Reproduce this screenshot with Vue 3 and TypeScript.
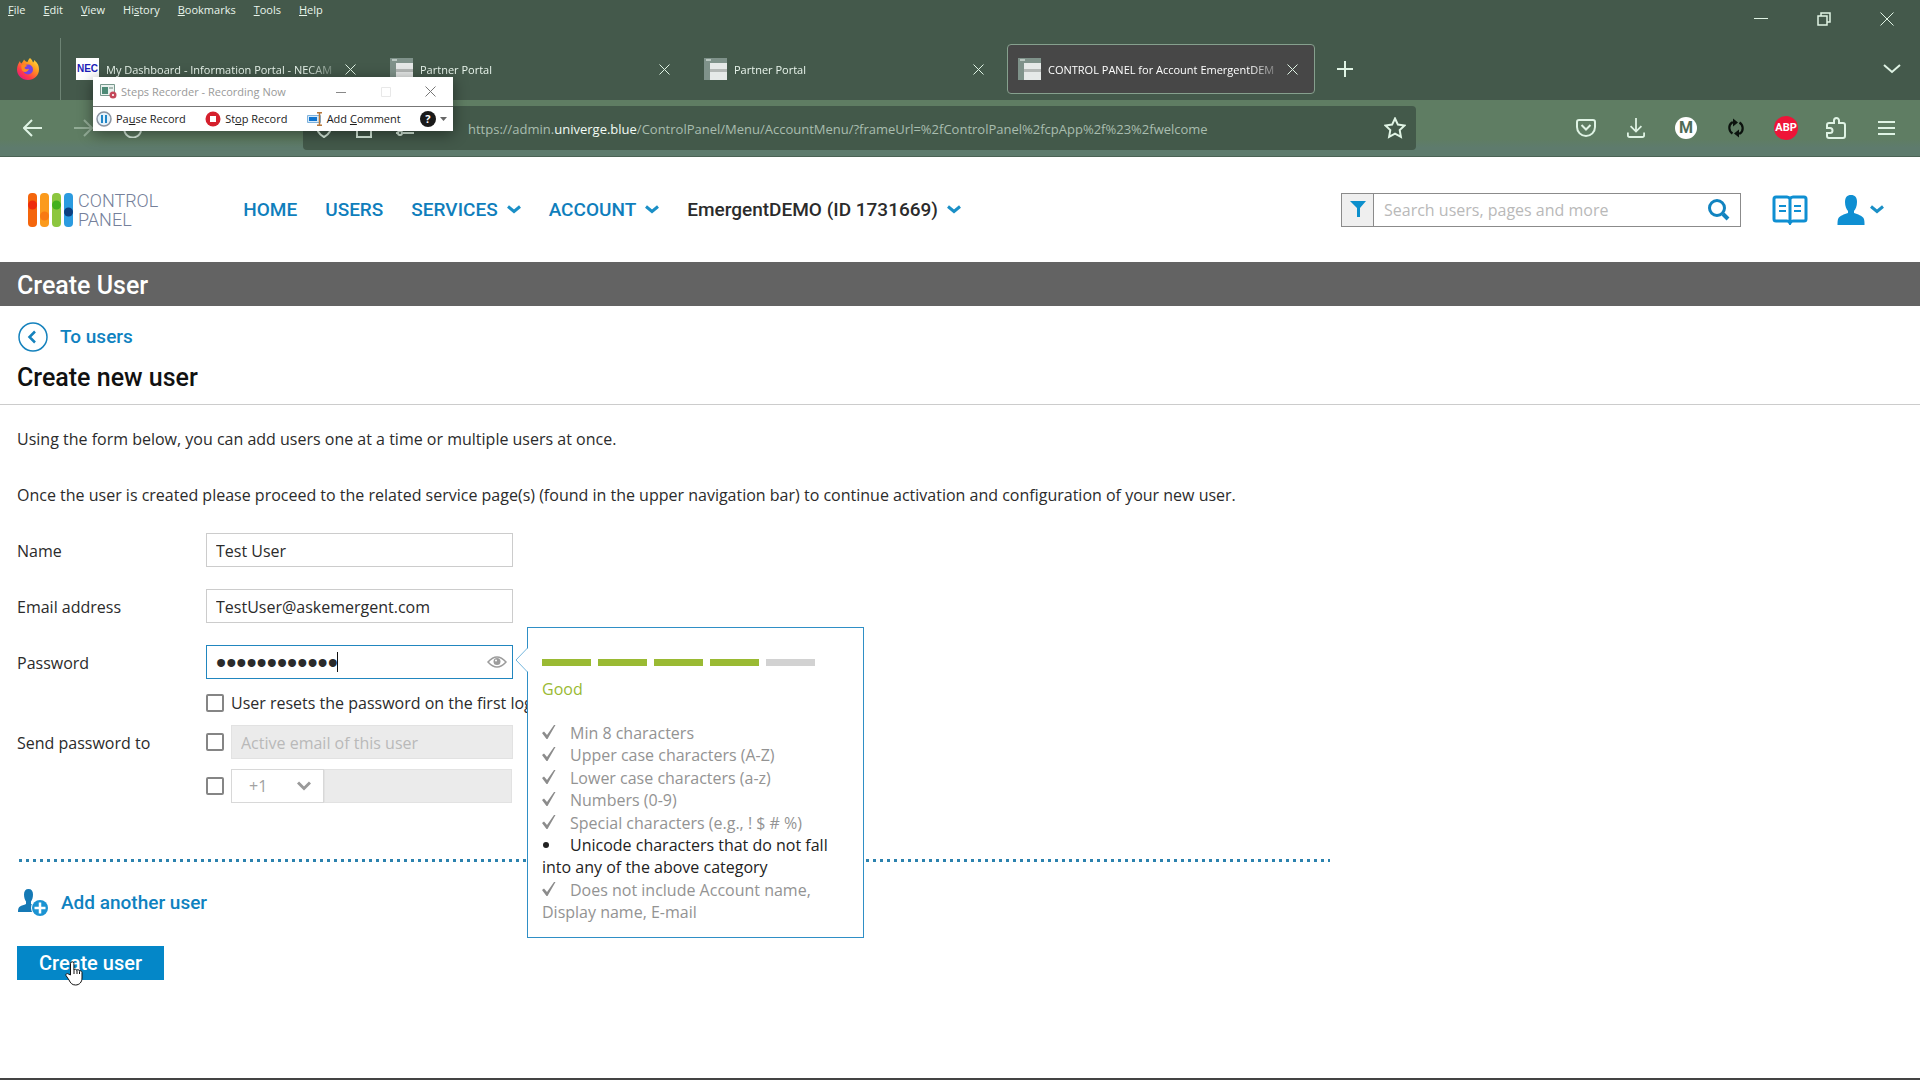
<script setup lang="ts">
import { ref } from 'vue'

interface Tab {
  title: string
  icon: 'nec' | 'portal'
  active: boolean
}

interface Rule {
  text: string
  met: boolean
}

const menus: string[][] = [
  ['', 'F', 'ile'],
  ['', 'E', 'dit'],
  ['', 'V', 'iew'],
  ['Hi', 's', 'tory'],
  ['', 'B', 'ookmarks'],
  ['', 'T', 'ools'],
  ['', 'H', 'elp'],
]

const tabs: Tab[] = [
  { title: 'My Dashboard - Information Portal - NECAM', icon: 'nec', active: false },
  { title: 'Partner Portal', icon: 'portal', active: false },
  { title: 'Partner Portal', icon: 'portal', active: false },
  { title: 'CONTROL PANEL for Account EmergentDEM', icon: 'portal', active: true },
]

const rules: Rule[] = [
  { text: 'Min 8 characters', met: true },
  { text: 'Upper case characters (A-Z)', met: true },
  { text: 'Lower case characters (a-z)', met: true },
  { text: 'Numbers (0-9)', met: true },
  { text: 'Special characters (e.g., ! $ # %)', met: true },
  { text: 'Unicode characters that do not fall into any of the above category', met: false },
  { text: 'Does not include Account name, Display name, E-mail', met: true },
]

const nav = [
  { label: 'HOME', menu: false, dark: false },
  { label: 'USERS', menu: false, dark: false },
  { label: 'SERVICES', menu: true, dark: false },
  { label: 'ACCOUNT', menu: true, dark: false },
  { label: 'EmergentDEMO (ID 1731669)', menu: true, dark: true },
]

const strength = 4
const name = ref('Test User')
const email = ref('TestUser@askemergent.com')
const password = ref('Passw0rd!234')
const resetOnLogin = ref(false)
const sendEmail = ref(false)
const sendPhone = ref(false)
</script>

<template>
  <div class="window">
    <div class="chrome">
      <div class="titlebar">
        <nav class="menubar">
          <a v-for="m in menus" :key="m[2]" href="#">{{ m[0] }}<u>{{ m[1] }}</u>{{ m[2] }}</a>
        </nav>
        <div class="wincontrols">
          <button aria-label="Minimize"><svg width="14" height="14" viewBox="0 0 14 14"><path d="M0 6.500h14" /></svg></button>
          <button aria-label="Restore"><svg width="14" height="14" viewBox="0 0 14 14"><path stroke-width="1.500" d="M1 4h9v9H1zM4 4V1h9v9h-3" /></svg></button>
          <button aria-label="Close window"><svg width="14" height="14" viewBox="0 0 14 14"><path d="M.5.5l13 13M13.500.5l-13 13" /></svg></button>
        </div>
      </div>

      <div class="tabstrip">
        <div class="pinned">
          <svg width="24" height="24" viewBox="0 0 24 24">
            <defs>
              <linearGradient id="fox" x1="1" y1="0" x2=".2" y2="1">
                <stop offset="0" stop-color="#fff04a" />
                <stop offset=".4" stop-color="#ff9a1f" />
                <stop offset=".75" stop-color="#ff3b47" />
                <stop offset="1" stop-color="#e31587" />
              </linearGradient>
            </defs>
            <g stroke="none">
              <path fill="url(#fox)" d="M14 1c2 1.500 2.500 3 3 4.500 1-.5 1-1.500 1-2.500 4 3 5 6 5 9.500C23 18.500 18 23 12 23S1 18.500 1 12.500C1 9 2.500 6 4 4c0 1 .5 2 1.500 2.500C6.500 5 7.500 4 8 2.500c1 1.500 2 2.500 3.500 2.500C12 3.500 13 2 14 1z" />
              <circle cx="12" cy="12.500" r="5" fill="#7543e3" />
              <path fill="#ff8a1e" d="M5.500 8c2-1 4-.6 6 1-1.500.2-2.500 1-3 2 1 1.500 3 1.500 4.500.8-.5 2-2 3.200-4 3.200-3 0-4-3.500-3.500-7z" />
            </g>
          </svg>
        </div>
        <div v-for="(t, i) in tabs" :key="i" class="tab" :class="{ active: t.active }">
          <span v-if="t.icon === 'nec'" class="nec">NEC</span>
          <svg v-else width="23" height="22" viewBox="0 0 23 22">
            <path fill="#7f928a" d="M0 0h23v22H0z" />
            <path fill="#b9c6c0" d="M2 1h5v2H2z" />
            <path fill="#e6e9e8" d="M6 5h17v17H6z" />
            <path fill="#b4b8b6" d="M6 11h17v3H6z" />
          </svg>
          <span class="title">{{ t.title }}</span>
          <button class="close" aria-label="Close tab"><svg width="11" height="11" viewBox="0 0 11 11"><path d="M.5.5l10 10M10.500.5l-10 10" /></svg></button>
        </div>
        <button class="newtab" aria-label="New tab"><svg width="16" height="16" viewBox="0 0 16 16"><path d="M8 0v16M0 8h16" /></svg></button>
        <button class="alltabs" aria-label="List all tabs"><svg width="18" height="10" viewBox="0 0 18 10"><path d="M1 1l8 7 8-7" /></svg></button>
      </div>

      <div class="toolbar">
        <button aria-label="Back"><svg width="20" height="18" viewBox="0 0 20 18"><path d="M19 9H2M9 1L1 9l8 8" /></svg></button>
        <button class="dim" aria-label="Forward"><svg width="20" height="18" viewBox="0 0 20 18"><path d="M1 9h17M11 1l8 8-8 8" /></svg></button>
        <button aria-label="Reload"><svg width="20" height="20" viewBox="0 0 20 20"><path d="M18 4v5h-5M18 9a8.500 8.500 0 1 0 0 4" /></svg></button>
        <div class="urlbar">
          <svg width="18" height="20" viewBox="0 0 18 20"><path d="M9 1l8 3c0 7-2 12-8 15C3 16 1 11 1 4z" /></svg>
          <svg width="18" height="20" viewBox="0 0 18 20"><path d="M2 9h14v10H2zM5 9V5a4 4 0 0 1 8 0v4" /></svg>
          <svg width="20" height="20" viewBox="0 0 20 20"><path d="M1 5h10M15 5h4M1 15h3M8 15h11" /><circle cx="13" cy="5" r="2" /><circle cx="5" cy="15" r="2" /></svg>
          <p class="url">https://admin.<b>univerge.blue</b>/ControlPanel/Menu/AccountMenu/?frameUrl=%2fControlPanel%2fcpApp%2f%23%2fwelcome</p>
          <button class="star" aria-label="Bookmark this page"><svg width="22" height="22" viewBox="0 0 22 22"><path d="M11 1.500l2.900 6.100 6.600.9-4.800 4.600 1.200 6.700L11 16.600l-5.900 3.200 1.200-6.700L1.500 8.500l6.600-.9z" /></svg></button>
        </div>
        <button aria-label="Pocket"><svg width="20" height="18" viewBox="0 0 20 18"><path d="M3 1h14q2 0 2 2v5a9 9 0 0 1-18 0V3q0-2 2-2zM5.500 6l4.500 4.500L14.500 6" /></svg></button>
        <button aria-label="Downloads"><svg width="18" height="20" viewBox="0 0 20 22"><path d="M10 0v14M4 9l6 6 6-6M1 16v3q0 2 2 2h14q2 0 2-2v-3" /></svg></button>
        <button aria-label="Account"><span class="badge-m">M</span></button>
        <button aria-label="Sync">
          <svg class="solid" width="16" height="20" viewBox="0 0 16 20">
            <path fill="none" stroke="#0b120d" stroke-width="2.200" d="M4.500 15.500C.5 13 .2 7 4 4.500H6M11.500 4.500C15.500 7 15.800 13 12 15.500H10" />
            <path fill="#0b120d" d="M5 .5l5 4-5 4zM11 19.500l-5-4 5-4z" />
          </svg>
        </button>
        <button aria-label="Adblock Plus"><span class="badge-abp">ABP</span></button>
        <button aria-label="Extensions"><svg width="20" height="22" viewBox="0 0 20 22"><path d="M8 6V3.500a2.500 2.500 0 0 1 5 0V6h4q2 0 2 2v11q0 2-2 2H3q-2 0-2-2v-3h3a2.500 2.500 0 0 0 0-5H1V8q0-2 2-2z" /></svg></button>
        <button aria-label="Menu"><svg width="17" height="14" viewBox="0 0 17 14"><path d="M0 1h17M0 7h17M0 13h17" /></svg></button>
      </div>
    </div>

    <section class="recorder" aria-label="Steps Recorder">
      <div class="rec-title">
        <svg width="17" height="15" viewBox="0 0 17 15">
          <path fill="#e9f1ee" stroke="#78998d" d="M.5.5h14v11H.5z" />
          <path fill="#4d8a76" d="M2 3h6v7H2z" />
          <path fill="#a9bab3" d="M9 3h4v2H9z" />
          <circle cx="13" cy="11" r="3.500" fill="#c4475a" />
          <path fill="#f3dede" d="M12 10h2v2h-2z" />
        </svg>
        <span>Steps Recorder - Recording Now</span>
        <button aria-label="Minimize recorder"><svg width="10" height="10" viewBox="0 0 10 10"><path stroke="#888" d="M0 5.500h10" /></svg></button>
        <button aria-label="Maximize recorder" disabled><svg width="10" height="10" viewBox="0 0 10 10"><path stroke="#e8e8e8" d="M.5.5h9v9h-9z" /></svg></button>
        <button aria-label="Close recorder"><svg width="11" height="11" viewBox="0 0 11 11"><path stroke="#777" d="M.5.5l10 10M10.500.5l-10 10" /></svg></button>
      </div>
      <div class="rec-tools">
        <button>
          <svg width="16" height="16" viewBox="0 0 16 16"><circle cx="8" cy="8" r="7" fill="#e3f1fa" stroke="#8a93a0" stroke-width="1.500" /><path fill="#1f86c8" d="M5 4h2v8H5zM9 4h2v8H9z" /></svg>
          <span>Pa<u>u</u>se Record</span>
        </button>
        <button>
          <svg width="16" height="16" viewBox="0 0 16 16"><circle cx="8" cy="8" r="7.500" fill="#d5202d" /><path fill="#fff" d="M5 5h6v6H5z" /></svg>
          <span>St<u>o</u>p Record</span>
        </button>
        <button>
          <svg width="16" height="14" viewBox="0 0 16 14"><path fill="#d6eafa" stroke="#7fb2dc" d="M.5 3.500h13v7H.5z" /><path fill="#0f74cf" d="M2 5h8v4H2z" /><path fill="none" stroke="#b5763a" stroke-width="1.500" d="M10 .8h5M10 13.200h5M12.500 1v12" /></svg>
          <span>Add <u>C</u>omment</span>
        </button>
        <button class="help" aria-label="Help"><span class="q">?</span><svg width="7" height="4" viewBox="0 0 7 4"><path fill="#666" d="M0 0h7L3.500 4z" /></svg></button>
      </div>
    </section>

    <header class="site">
      <a class="logo" href="#">
        <svg width="46" height="36" viewBox="0 0 46 36">
          <rect x="0" y="1" width="9" height="34" rx="4" fill="#f4650c" /><circle cx="4.500" cy="13" r="4.500" fill="#ee2c0c" />
          <rect x="12" y="1" width="9" height="34" rx="4" fill="#fb9a1c" /><circle cx="16.500" cy="24" r="4.500" fill="#f87a12" />
          <rect x="24" y="1" width="9" height="34" rx="4" fill="#8cc63f" /><circle cx="28.500" cy="13" r="4.500" fill="#44b01e" />
          <rect x="36" y="1" width="9" height="34" rx="4" fill="#2b9be0" /><circle cx="40.500" cy="20" r="4.500" fill="#0d3f80" />
        </svg>
        <span class="brand"><span>CONTROL</span><span>PANEL</span></span>
      </a>
      <nav class="mainnav">
        <a v-for="n in nav" :key="n.label" href="#" :class="{ dark: n.dark }">{{ n.label }}<svg v-if="n.menu" width="14" height="9" viewBox="0 0 14 9"><path d="M1 1.500l6 5 6-5" /></svg></a>
      </nav>
      <div class="search">
        <button class="filter" aria-label="Filter"><svg width="16" height="18" viewBox="0 0 16 18"><path fill="#0c8fcc" d="M0 0h16L10 7v9H7V7z" /></svg></button>
        <input type="text" aria-label="Search" placeholder="Search users, pages and more" />
        <button class="go" aria-label="Search now"><svg width="22" height="22" viewBox="0 0 22 22"><circle cx="9" cy="9" r="7.500" /><path stroke-width="4" d="M15 15l5 5" /></svg></button>
      </div>
      <a class="book" href="#" aria-label="Knowledge base">
        <svg width="36" height="30" viewBox="0 0 36 30"><path d="M18 4q-1-2-3-2H4Q2 2 2 4v20q0 2 2 2h11q2 0 3 2 1-2 3-2h11q2 0 2-2V4q0-2-2-2H21q-2 0-3 2zV28" /><path stroke-width="2" d="M7 11h7M7 16h7M22 11h7M22 16h7" /></svg>
      </a>
      <a class="me" href="#" aria-label="My account">
        <svg class="person" width="28" height="30" viewBox="0 0 28 30"><path d="M14 0c4 0 6 2.500 6 7s-1.500 7-3 9v2c4 1.500 8 2.500 9.500 5 1 2 1 4 1 7H.5c0-3 0-5 1-7 1.500-2.500 5.500-3.500 9.500-5v-2c-1.500-2-3-4.500-3-9s2-7 6-7z" /></svg>
        <svg width="14" height="9" viewBox="0 0 14 9"><path d="M1 1.500l6 5 6-5" /></svg>
      </a>
    </header>

    <div class="pagebar">Create User</div>

    <main>
      <a class="back" href="#">
        <svg width="30" height="30" viewBox="0 0 30 30"><circle cx="15" cy="15" r="14" stroke-width="1.500" /><path stroke-width="2.500" d="M17 9.500L11.500 15l5.500 5.500" /></svg>
        <span>To users</span>
      </a>
      <h1>Create new user</h1>

      <form @submit.prevent>
        <p>Using the form below, you can add users one at a time or multiple users at once.</p>
        <p>Once the user is created please proceed to the related service page(s) (found in the upper navigation bar) to continue activation and configuration of your new user.</p>

        <div class="row">
          <label class="lbl" for="name">Name</label>
          <input id="name" v-model="name" class="field" type="text" />
        </div>
        <div class="row">
          <label class="lbl" for="email">Email address</label>
          <input id="email" v-model="email" class="field" type="text" />
        </div>
        <div class="row">
          <label class="lbl" for="password">Password</label>
          <div class="pw">
            <input id="password" v-model="password" class="field focus" type="password" />
            <span class="caret"></span>
            <button type="button" class="eye" aria-label="Show password">
              <svg width="20" height="12" viewBox="0 0 20 12"><path fill="none" stroke="#9c9c9c" stroke-width="1.500" d="M1 6q9-10 18 0-9 10-18 0z" /><circle cx="10" cy="5.500" r="3.500" fill="#9c9c9c" /><circle cx="9" cy="4.500" r="1" fill="#fff" /></svg>
            </button>

            <aside class="tip">
              <svg class="arrow" width="13" height="26" viewBox="0 0 13 26"><path fill="#fff" d="M13 1L1 13l12 12z" /><path fill="none" stroke="#74b6dc" d="M12.500 1L1 13l11.500 12" /></svg>
              <div class="meter"><i v-for="n in 5" :key="n" :class="{ on: n <= strength }"></i></div>
              <p class="grade">Good</p>
              <ul>
                <li v-for="r in rules" :key="r.text" :class="{ unmet: !r.met }">
                  <span class="mark">
                    <svg v-if="r.met" width="14" height="14" viewBox="0 0 14 14"><path fill="#8c8c8c" d="M0 8l2-1.500L5 10 12 0h1.500L5.500 14H4.500z" /></svg>
                    <svg v-else width="14" height="14" viewBox="0 0 14 14"><circle cx="4" cy="8" r="3" fill="#222" /></svg>
                  </span>{{ r.text }}
                </li>
              </ul>
            </aside>
          </div>
        </div>

        <div class="row options">
          <span class="lbl"></span>
          <input id="reset" v-model="resetOnLogin" type="checkbox" />
          <label class="resetlbl" for="reset">User resets the password on the first login</label>
        </div>
        <div class="row options">
          <span class="lbl">Send password to</span>
          <input v-model="sendEmail" type="checkbox" aria-label="Send to email" />
          <input class="field off" type="text" aria-label="Email" placeholder="Active email of this user" disabled />
        </div>
        <div class="row options">
          <span class="lbl"></span>
          <input v-model="sendPhone" type="checkbox" aria-label="Send to phone" />
          <div class="phone">
            <div class="code">
              <select aria-label="Country code" disabled><option>+1</option></select>
              <svg width="14" height="10" viewBox="0 0 14 10"><path d="M1 1.500l6 6 6-6" /></svg>
            </div>
            <input class="field off" type="text" aria-label="Phone" disabled />
          </div>
        </div>

        <div class="dots"></div>

        <a class="add" href="#">
          <svg width="31" height="28" viewBox="0 0 31 28">
            <path fill="#1579b5" d="M10.500 0c3 0 4.500 2 4.500 5.500S14 11 13 12.500V15c3 1 6 2 7 4v4H0c0-3 .5-4.500 2-5.500s4-1.500 6-2.500v-2.500C7 11 6 9 6 5.500S7.500 0 10.500 0z" />
            <circle cx="22" cy="19" r="9" fill="#fff" />
            <circle cx="22" cy="19" r="8" fill="#1b93d2" />
            <path stroke="#fff" stroke-width="2.500" d="M22 13.500v11M16.500 19h11" />
          </svg>
          <span>Add another user</span>
        </a>
        <div class="submit">
          <button type="submit">Create user</button>
          <svg class="cursor" width="18" height="25" viewBox="0 0 18 25"><path fill="#fff" stroke="#111" stroke-linejoin="round" d="M5.500 14V2.500a1.700 1.700 0 0 1 3.400 0V9a1.500 1.500 0 0 1 2.800.5 1.500 1.500 0 0 1 2.800.7 1.500 1.500 0 0 1 2.500 1.200V17c0 4-2.500 7-6.500 7-3.500 0-5-2-6.500-5L1 14.500c-.5-1.500 1-2.500 2.300-1.500zM9 9v4M12 9.500V13M14.500 10.500V13" /></svg>
        </div>
      </form>
    </main>
    <div class="taskbar"></div>
  </div>
</template>

<style>
body {
  margin: 0;
  background: #fff;
}
</style>

<style scoped>
* {
  box-sizing: border-box;
}

.window {
  position: relative;
  display: flex;
  flex-direction: column;
  min-height: 100vh;
  overflow: hidden;
  background: #fff;
  color: #2b2b2b;
  font-family: "Open Sans", "Noto Sans", sans-serif;
  font-size: 16px;
  line-height: 22px;
}

a {
  color: inherit;
  text-decoration: none;
}

button {
  display: flex;
  align-items: center;
  justify-content: center;
  padding: 0;
  border: 0;
  background: none;
  color: inherit;
  font: inherit;
}

svg {
  display: block;
  flex: none;
}

.chrome {
  background: #44594b;
  color: #e9f5ec;
  font-size: 11px;
  line-height: 20px;
}

.chrome svg:not(.solid) {
  fill: none;
  stroke: #dff3e4;
}

.titlebar {
  display: flex;
  justify-content: space-between;
  height: 38px;
  padding: 0 2px 0 8px;
}

.menubar {
  display: flex;
  gap: 18px;
}

.wincontrols {
  display: flex;
}

.wincontrols button {
  width: 63px;
  height: 38px;
}

.tabstrip {
  display: flex;
  align-items: center;
  height: 62px;
}

.pinned {
  display: flex;
  align-items: center;
  width: 61px;
  height: 62px;
  padding-left: 16px;
  border-right: 1px solid #6d8374;
}

.tab {
  display: flex;
  flex: none;
  align-items: center;
  width: 308px;
  height: 50px;
  margin-left: 6px;
  padding: 0 16px 0 10px;
  border: 1px solid transparent;
  border-radius: 4px;
}

.tab:nth-child(2) {
  margin-left: 4px;
}

.tab.active {
  border-color: #86a08e;
  background: #474747;
  color: #fff;
}

.tab svg path[fill] {
  stroke: none;
}

.nec {
  width: 23px;
  background: #fff;
  color: #1d1db8;
  font: bold 10px/22px "Liberation Sans", sans-serif;
  text-align: center;
}

.title {
  flex: 1;
  margin: 0 2px 0 7px;
  padding-top: 2px;
  overflow: hidden;
  white-space: nowrap;
  mask-image: linear-gradient(to right, #000 85%, transparent);
}

.newtab {
  width: 60px;
  height: 40px;
}

.alltabs {
  width: 40px;
  height: 40px;
  margin: 0 8px 0 auto;
}

.newtab svg,
.alltabs svg {
  stroke-width: 2;
}

.toolbar {
  display: flex;
  align-items: center;
  height: 57px;
  padding: 0 9px 0 8px;
  border-bottom: 1px solid #4b6355;
  background: linear-gradient(#5f7d63 70%, #5e7b6d 85%);
}

.toolbar > button {
  width: 50px;
  height: 44px;
}

.toolbar svg {
  stroke-width: 2;
}

.dim {
  opacity: .4;
}

.urlbar {
  display: flex;
  flex: 1;
  align-items: center;
  gap: 22px;
  height: 44px;
  margin: 0 145px;
  padding: 0 10px 0 12px;
  border-radius: 4px;
  background: #43594a;
}

.url {
  flex: 1;
  margin: 0 0 0 31px;
  padding-top: 2px;
  overflow: hidden;
  color: #a9bdaf;
  font-size: 13px;
  white-space: nowrap;
}

.url b {
  color: #f2fbf4;
  font-weight: 400;
}

.badge-m,
.badge-abp {
  width: 22px;
  border-radius: 50%;
  background: #fff;
  color: #4f6b57;
  font: bold 16px/22px Roboto, sans-serif;
}

.badge-abp {
  width: 24px;
  background: #ef1438;
  color: #fff;
  font-size: 11px;
  line-height: 24px;
}

.recorder {
  position: absolute;
  z-index: 5;
  top: 77px;
  left: 93px;
  width: 360px;
  background: #fff;
  box-shadow: 0 3px 14px rgba(0, 0, 0, .45);
  color: #1c1c1c;
  font-size: 11px;
  line-height: 20px;
}

.rec-title {
  display: flex;
  align-items: center;
  height: 30px;
  padding-left: 7px;
  border-bottom: 1px solid #777;
  color: #999;
}

.rec-title span {
  flex: 1;
  margin-left: 4px;
}

.rec-title button {
  width: 45px;
  height: 28px;
}

.rec-title button svg {
  fill: none;
}

.rec-tools {
  display: flex;
  align-items: center;
  justify-content: space-between;
  height: 24px;
  padding: 0 6px 0 3px;
}

.rec-tools button {
  gap: 4px;
}

.q {
  width: 16px;
  border-radius: 50%;
  background: #1a1a1a;
  color: #fff;
  font-weight: 700;
  line-height: 16px;
}

.site {
  display: flex;
  align-items: center;
  height: 105px;
  padding: 0 36px 0 28px;
}

.logo {
  display: flex;
  align-items: center;
  gap: 4px;
  color: #75809a;
  font: 300 18px/19px Roboto, sans-serif;
}

.brand {
  display: flex;
  flex-direction: column;
}

.mainnav {
  display: flex;
  flex: 1;
  gap: 28px;
  margin-left: 85px;
  color: #0f7ebc;
  font: 500 19px/26px Roboto, sans-serif;
}

.mainnav a {
  display: flex;
  gap: 9px;
  align-items: center;
}

.mainnav .dark {
  color: #2b2b2b;
}

.mainnav svg,
.me svg:not(.person) {
  fill: none;
  stroke: #1a8fc6;
  stroke-width: 3;
}

.search {
  display: flex;
  width: 400px;
  height: 34px;
  border: 1px solid #8b8b8b;
}

.filter {
  width: 32px;
  border-right: 1px solid #8b8b8b;
  background: #efefef;
}

.search input {
  flex: 1;
  min-width: 0;
  padding: 0 10px;
  border: 0;
  outline: 0;
  font: inherit;
}

.search input::placeholder {
  color: #b9b9b9;
}

.go {
  width: 42px;
}

.go svg,
.book svg {
  fill: none;
  stroke: #1183c0;
  stroke-width: 3;
}

.book {
  margin-left: 31px;
}

.book svg {
  stroke: #0f8fd2;
}

.me {
  display: flex;
  gap: 5px;
  align-items: center;
  margin-left: 29px;
}

.person {
  fill: #0f8fd2;
}

.pagebar {
  height: 44px;
  padding-left: 17px;
  background: #636363;
  color: #fff;
  font: 500 25px/48px Roboto, sans-serif;
}

.back {
  display: flex;
  gap: 12px;
  align-items: center;
  width: fit-content;
  margin: 16px 0 0 18px;
  color: #0f82c0;
  font: 500 19px/26px Roboto, sans-serif;
}

.back svg {
  fill: none;
  stroke: #1582bd;
}

h1 {
  margin: 0;
  padding: 10px 17px;
  border-bottom: 1px solid #ccc;
  color: #111;
  font: 500 25px/32px Roboto, sans-serif;
}

form {
  padding: 23px 17px 0;
}

form > p {
  margin: 0 0 34px;
}

.row {
  display: flex;
  align-items: center;
  height: 34px;
  margin-bottom: 22px;
}

form > p + .row {
  margin-top: -7px;
}

.lbl {
  width: 189px;
  padding-top: 2px;
}

.field {
  width: 307px;
  height: 34px;
  padding: 2px 9px 0;
  border: 1px solid #ccc;
  outline: 0;
  background: #fff;
  color: #2b2b2b;
  font: inherit;
}

.field.focus {
  border-color: #2186bf;
  font: 29px "Liberation Sans", sans-serif;
}

.pw {
  position: relative;
}

.caret {
  position: absolute;
  top: 7px;
  left: 131px;
  width: 1px;
  height: 20px;
  background: #111;
}

.eye {
  position: absolute;
  top: 0;
  right: 6px;
  height: 34px;
}

.tip {
  position: absolute;
  z-index: 2;
  top: -18px;
  left: 321px;
  width: 337px;
  height: 311px;
  padding: 31px 28px 0 14px;
  border: 1px solid #2f8fc6;
  background: #fff;
  color: #939393;
}

.arrow {
  position: absolute;
  top: 19px;
  left: -13px;
}

.meter {
  display: flex;
  gap: 7px;
}

.meter i {
  width: 49px;
  height: 7px;
  background: #d2d2d2;
}

.meter .on {
  background: #9aba33;
}

.grade {
  margin: 12px 0 22px;
  color: #9aba33;
}

.tip ul {
  margin: 0;
  padding: 0;
  line-height: 1.4;
  list-style: none;
}

.tip .unmet {
  color: #222;
}

.mark {
  display: inline-block;
  width: 28px;
}

.options {
  height: 34px;
  margin-bottom: 10px;
}

.row:has(#reset) {
  height: 20px;
  margin: -8px 0 12px;
}

input[type="checkbox"] {
  width: 18px;
  height: 18px;
  margin: 0 7px 0 0;
  border: 2px solid #858585;
  border-radius: 2px;
  appearance: none;
  background: #fff;
}

.resetlbl {
  white-space: nowrap;
}

.field.off {
  width: 282px;
  border-color: #e2e2e2;
  background: #ebebeb;
}

.field.off::placeholder {
  color: #b9b9b9;
}

.phone {
  display: flex;
  width: 281px;
}

.phone .off {
  flex: 1;
  width: auto;
  min-width: 0;
}

.code {
  display: flex;
  position: relative;
  width: 93px;
}

.code select {
  width: 100%;
  height: 34px;
  padding: 0 17px;
  border: 1px solid #d8d8d8;
  appearance: none;
  background: #fff;
  color: #a2a2a2;
  font: inherit;
  opacity: 1;
}

.code svg {
  position: absolute;
  top: 12px;
  right: 13px;
  fill: none;
  stroke: #9a9a9a;
  stroke-width: 3;
}

.dots {
  width: 1311px;
  max-width: 100%;
  height: 3px;
  margin: 56px 0 0 2px;
  background: repeating-linear-gradient(to right, #2c82ae 0 3px, transparent 3px 7px);
}

.add {
  display: flex;
  gap: 12px;
  align-items: center;
  width: fit-content;
  margin: 27px 0 0 1px;
  color: #0f82c0;
  font: 500 19px/28px Roboto, sans-serif;
}

.submit {
  position: relative;
  width: 147px;
  margin-top: 29px;
}

.submit button {
  width: 100%;
  height: 34px;
  background: #0487c8;
  color: #fff;
  font: 500 20px/34px Roboto, sans-serif;
}

.cursor {
  position: absolute;
  top: 15px;
  left: 48px;
}

.taskbar {
  height: 2px;
  margin-top: auto;
  background: #444;
}
</style>
